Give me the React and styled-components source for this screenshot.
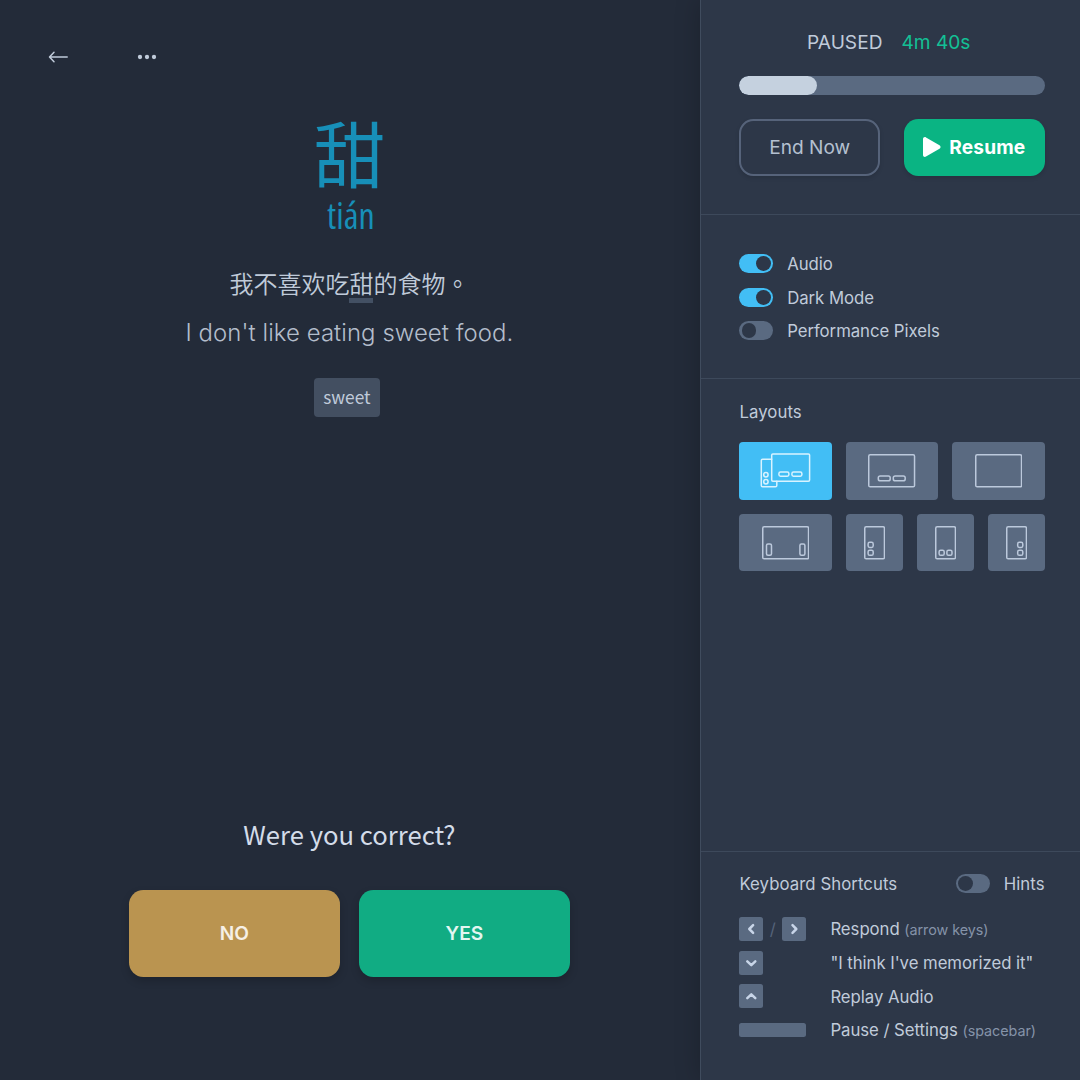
import React, { useState } from "react";
import styled, { createGlobalStyle, css } from "styled-components";

const color = {
  page: "#232b39",
  panel: "#2d3748",
  line: "#3d495b",
  muted: "#5a6a81",
  text: "#c0cbda",
  soft: "#8593a8",
  blue: "#42bef5",
  word: "#178fb8",
  green: "#0ab483",
};

const GlobalStyle = createGlobalStyle`
  *, *::before, *::after { box-sizing: border-box; }
  body {
    margin: 0;
    background: ${color.page};
    color: ${color.text};
    font-family: Inter, "Noto Sans CJK SC", sans-serif;
    font-size: 16.75px;
  }
  button { font: inherit; color: inherit; border: 0; padding: 0; cursor: pointer; }
  svg { display: block; flex: none; }
`;

const Screen = styled.div`
  display: flex;
  height: 100vh;
  overflow: hidden;
`;

/* ---------- quiz card ---------- */

const Quiz = styled.main`
  flex: 1;
  display: flex;
  flex-direction: column;
  align-items: center;
  padding: 0 1.2px 103.4px 0;
`;

const TopBar = styled.nav`
  align-self: stretch;
  display: flex;
  align-items: flex-start;
  gap: 68px;
  height: 106.6px;
  padding: 49px 48px 0;
`;

const IconButton = styled.button`
  display: flex;
  background: none;
`;

const Word = styled.div`
  color: ${color.word};
  font: 400 71.5px/88px "Noto Sans CJK SC", sans-serif;
`;

const Pinyin = styled.div`
  margin-top: 1.7px;
  color: ${color.word};
  font: 400 36px/40px "Open Sans", sans-serif;
  font-stretch: 75%;
  padding-left: 3px;
`;

const Sentence = styled.p`
  margin: 28.7px 0 0;
  font: 400 24px/36px "Noto Sans CJK SC", sans-serif;
  font-weight: 350;
`;

const Traditional = styled.span`
  font-family: "Noto Sans CJK TC", sans-serif;
`;

const Target = styled.span`
  position: relative;
  &::after {
    content: "";
    position: absolute;
    left: 0;
    right: 0;
    bottom: -3.2px;
    height: 5px;
    background: #435063;
  }
`;

const Translation = styled.p`
  margin: 14px 0 0;
  color: #b3bdcb;
  font-weight: 300;
  font-size: 23.93px;
  line-height: 36px;
  letter-spacing: 0.07px;
`;

const Chip = styled.span`
  margin: 27.4px 5px 0 0;
  height: 38.3px;
  padding: 0 9.5px;
  border-radius: 4px;
  background: #434f61;
  font: 400 17.3px/38px "Noto Sans CJK SC", sans-serif;
`;

const Question = styled.h1`
  margin: auto 0 38.7px;
  color: #d3dce9;
  font: 400 25.66px/36px "Noto Sans CJK SC", sans-serif;
`;

const Answers = styled.div`
  display: flex;
  gap: 19.1px;
`;

const AnswerButton = styled.button`
  width: 210.8px;
  height: 86.2px;
  padding-bottom: 1px;
  border-radius: 14.4px;
  background: ${(p) => (p.$positive ? "#11ac83" : "#ba9450")};
  color: ${(p) => (p.$positive ? "#e3f6f1" : "#f6f0e6")};
  font-size: 19.14px;
  font-weight: 600;
  box-shadow: 0 4px 8px rgba(0, 0, 0, 0.18);
`;

/* ---------- side panel ---------- */

const Panel = styled.aside`
  width: 380px;
  display: flex;
  flex-direction: column;
  background: ${color.panel};
  border-left: 1px solid #404c5e;
  box-shadow: 0 0 24px rgba(0, 0, 0, 0.22);
`;

const Section = styled.section`
  padding: ${(p) => p.$top}px 35.4px 0 38.4px;
  border-top: ${(p) => (p.$first ? "0" : `1px solid ${color.line}`)};
  ${(p) => (p.$height ? css`height: ${p.$height}px;` : css`flex: 1;`)}
`;

const Status = styled.div`
  display: flex;
  justify-content: center;
  gap: 19px;
  padding-right: 6.5px;
  font-size: 19.14px;
  line-height: 28px;
`;

const TimeLeft = styled.span`
  color: #13c095;
`;

const Track = styled.div`
  height: 19.2px;
  margin-top: 19.6px;
  border-radius: 10px;
  background: ${color.muted};
  overflow: hidden;
`;

const Fill = styled.div`
  height: 100%;
  border-radius: 10px;
  background: #c5d1df;
`;

const Actions = styled.div`
  display: grid;
  grid-template-columns: 1fr 1fr;
  gap: 24px;
  margin-top: 23.9px;
`;

const ActionButton = styled.button`
  display: flex;
  align-items: center;
  justify-content: center;
  gap: 8.5px;
  height: 57.2px;
  border-radius: 14.4px;
  font-size: 19.14px;
  box-shadow: 0 2px 4px rgba(0, 0, 0, 0.12);
  ${(p) =>
    p.$primary
      ? css`
          background: ${color.green};
          color: #fff;
          font-weight: 700;
          letter-spacing: 0.15px;
        `
      : css`
          background: transparent;
          border: 2px solid #56637a;
          color: #b4c0d0;
        `}
`;

const Setting = styled.div`
  display: flex;
  align-items: center;
  gap: 14.2px;
  height: ${(p) => p.$height || 33.5}px;
`;

const Switch = styled.button`
  display: flex;
  align-items: center;
  justify-content: ${(p) => (p.$on ? "flex-end" : "flex-start")};
  width: 33.6px;
  height: 19.2px;
  padding: 0 2.2px;
  border-radius: 10px;
  background: ${(p) => (p.$on ? color.blue : color.muted)};
  &::before {
    content: "";
    width: 14.8px;
    height: 14.8px;
    border-radius: 50%;
    background: ${color.panel};
  }
`;

const Label = styled.span`
  line-height: 28px;
  padding-top: 1px;
  letter-spacing: ${(p) => (p.$heading ? 0.07 : -0.05)}px;
`;

const PanelHeading = styled.div`
  display: flex;
  align-items: center;
  justify-content: space-between;
  height: 28px;
`;

const LayoutRow = styled.div`
  display: grid;
  grid-template-columns: ${(p) => p.$columns};
  gap: 14.36px;
  margin-top: ${(p) => p.$top}px;
`;

const LayoutTile = styled.button`
  display: flex;
  align-items: center;
  justify-content: center;
  height: 57.4px;
  border-radius: 4px;
  background: ${(p) => (p.$active ? color.blue : color.muted)};
  color: ${(p) => (p.$active ? "#d9f3ff" : "#bcc9dc")};
`;

const Shortcuts = styled.div`
  margin-top: 15.2px;
`;

const ShortcutRow = styled.div`
  display: grid;
  grid-template-columns: 67px 1fr;
  column-gap: 24px;
  align-items: center;
  height: 33.5px;
  white-space: nowrap;
`;

const Keys = styled.div`
  display: flex;
  align-items: center;
  justify-content: space-between;
`;

const Key = styled.kbd`
  display: flex;
  align-items: center;
  justify-content: center;
  width: ${(p) => (p.$wide ? 67 : 24)}px;
  height: ${(p) => (p.$wide ? 14.6 : 24)}px;
  border-radius: 2.5px;
  background: ${color.muted};
  color: #c8d5e8;
`;

const Slash = styled.span`
  color: #55637a;
`;

const Note = styled.small`
  color: ${color.soft};
  font-size: 14.36px;
`;

/* ---------- drawings ---------- */

const Line = ({ w, h, sw = 1.5, children }) => (
  <svg width={w} height={h} viewBox={`0 0 ${w} ${h}`} fill="none" stroke="currentColor" strokeWidth={sw} strokeLinecap="round" strokeLinejoin="round">
    {children}
  </svg>
);

const Back = () => (
  <Line w={20} h={16} sw={1.5}>
    <path d="M19.2 8H1.8M6 3.3L1.5 8 6 12.7" />
  </Line>
);

const More = () => (
  <svg width="22" height="16" viewBox="0 0 22 16" fill="currentColor">
    <circle cx="4" cy="8" r="2.15" />
    <circle cx="11" cy="8" r="2.15" />
    <circle cx="18" cy="8" r="2.15" />
  </svg>
);

const Play = () => (
  <svg width="17.6" height="20" viewBox="0 0 17.6 20" fill="currentColor">
    <path d="M0 2.1C0 .5 1.6-.4 3 .4l13.5 7.9c1.4.8 1.4 2.6 0 3.4L3 19.6c-1.4.8-3-.1-3-1.7z" />
  </svg>
);

const chevrons = {
  left: "M14.1 8.2L10.3 12l3.8 3.8",
  right: "M10.5 8.2l3.8 3.8-3.8 3.8",
  down: "M8.3 10.3l4 3.8 4-3.8",
  up: "M8.3 14.1l4-3.8 4 3.8",
};

const Chevron = ({ to }) => (
  <Line w={24} h={24} sw={2.5}>
    <path d={chevrons[to]} />
  </Line>
);

const Wide = ({ children }) => (
  <Line w={47.4} h={33.6}>
    <rect x="0.75" y="0.75" width="45.8" height="32.1" rx="1.4" />
    {children}
  </Line>
);

const Tall = ({ dots }) => (
  <Line w={21.2} h={33.6}>
    <rect x="0.75" y="0.75" width="19.7" height="32.1" rx="1.4" />
    {dots.map(([x, y]) => (
      <rect key={`${x}-${y}`} x={x} y={y} width="5.1" height="5.1" rx="1.6" />
    ))}
  </Line>
);

const wideLayouts = [
  {
    id: "devices",
    icon: (
      <Line w={51} h={35}>
        <rect x="11.7" y="0.9" width="37.9" height="27.4" rx="1.2" />
        <path d="M11.7 6.2H2.6a1.3 1.3 0 0 0-1.3 1.3v24.9a1.3 1.3 0 0 0 1.3 1.3h12.9a1.3 1.3 0 0 0 1.3-1.3v-4.1" />
        <rect x="18.9" y="19.1" width="10" height="4.1" rx="1.6" />
        <rect x="31.9" y="19.1" width="10" height="4.1" rx="1.6" />
        <circle cx="5.9" cy="21.7" r="2.2" />
        <circle cx="5.9" cy="28.7" r="2.2" />
      </Line>
    ),
  },
  {
    id: "center",
    icon: (
      <Wide>
        <rect x="10.3" y="21.9" width="11.9" height="4.9" rx="1.9" />
        <rect x="25.3" y="21.9" width="11.9" height="4.9" rx="1.9" />
      </Wide>
    ),
  },
  { id: "blank", icon: <Wide /> },
];

const mixedLayouts = [
  {
    id: "edges",
    icon: (
      <Wide>
        <rect x="4.5" y="17.9" width="5" height="11.4" rx="1.5" />
        <rect x="37.9" y="17.9" width="5" height="11.4" rx="1.5" />
      </Wide>
    ),
  },
  { id: "tall-left", icon: <Tall dots={[[4.1, 16.3], [4.1, 24.2]]} /> },
  { id: "tall-bottom", icon: <Tall dots={[[4.1, 24.2], [11.9, 24.2]]} /> },
  { id: "tall-right", icon: <Tall dots={[[11.7, 16.3], [11.7, 24.2]]} /> },
];

const shortcuts = [
  { keys: ["left", "right"], text: "Respond", note: "(arrow keys)" },
  { keys: ["down"], text: '"I think I\'ve memorized it"' },
  { keys: ["up"], text: "Replay Audio" },
  { keys: [], text: "Pause / Settings", note: "(spacebar)" },
];

export default function App() {
  const [settings, setSettings] = useState({ Audio: true, "Dark Mode": true, "Performance Pixels": false });
  const [hints, setHints] = useState(false);
  const [layout, setLayout] = useState("devices");
  const progress = 25.5;

  const tiles = (list) =>
    list.map(({ id, icon }) => (
      <LayoutTile key={id} $active={layout === id} onClick={() => setLayout(id)}>
        {icon}
      </LayoutTile>
    ));

  return (
    <>
      <GlobalStyle />
      <Screen>
        <Quiz>
          <TopBar>
            <IconButton><Back /></IconButton>
            <IconButton><More /></IconButton>
          </TopBar>
          <Word>甜</Word>
          <Pinyin>tián</Pinyin>
          <Sentence>
            我不喜欢吃<Target>甜</Target>的<Traditional lang="zh-Hant">食物。</Traditional>
          </Sentence>
          <Translation>I don't like eating sweet food.</Translation>
          <Chip>sweet</Chip>
          <Question>Were you correct?</Question>
          <Answers>
            <AnswerButton>NO</AnswerButton>
            <AnswerButton $positive>YES</AnswerButton>
          </Answers>
        </Quiz>

        <Panel>
          <Section $first $top={28.1} $height={214.4}>
            <Status>
              <span>PAUSED</span>
              <TimeLeft>4m 40s</TimeLeft>
            </Status>
            <Track>
              <Fill style={{ width: `${progress}%` }} />
            </Track>
            <Actions>
              <ActionButton>End Now</ActionButton>
              <ActionButton $primary>
                <Play />
                Resume
              </ActionButton>
            </Actions>
          </Section>

          <Section $top={31.6} $height={164}>
            {Object.entries(settings).map(([name, on]) => (
              <Setting key={name}>
                <Switch $on={on} onClick={() => setSettings({ ...settings, [name]: !on })} />
                <Label>{name}</Label>
              </Setting>
            ))}
          </Section>

          <Section $top={18.5}>
            <PanelHeading>
              <Label $heading>Layouts</Label>
            </PanelHeading>
            <LayoutRow $columns="repeat(3, 1fr)" $top={16.4}>{tiles(wideLayouts)}</LayoutRow>
            <LayoutRow $columns="92.2px repeat(3, 1fr)" $top={14.36}>{tiles(mixedLayouts)}</LayoutRow>
          </Section>

          <Section $top={17.5} $height={229}>
            <PanelHeading>
              <Label $heading>Keyboard Shortcuts</Label>
              <Setting $height={28}>
                <Switch $on={hints} onClick={() => setHints(!hints)} />
                <Label $heading>Hints</Label>
              </Setting>
            </PanelHeading>
            <Shortcuts>
              {shortcuts.map(({ keys, text, note }) => (
                <ShortcutRow key={text}>
                  <Keys>
                    {keys.length === 0 && <Key $wide />}
                    {keys.map((k, i) => (
                      <React.Fragment key={k}>
                        {i > 0 && <Slash>/</Slash>}
                        <Key><Chevron to={k} /></Key>
                      </React.Fragment>
                    ))}
                  </Keys>
                  <Label>
                    {text} {note && <Note>{note}</Note>}
                  </Label>
                </ShortcutRow>
              ))}
            </Shortcuts>
          </Section>
        </Panel>
      </Screen>
    </>
  );
}
